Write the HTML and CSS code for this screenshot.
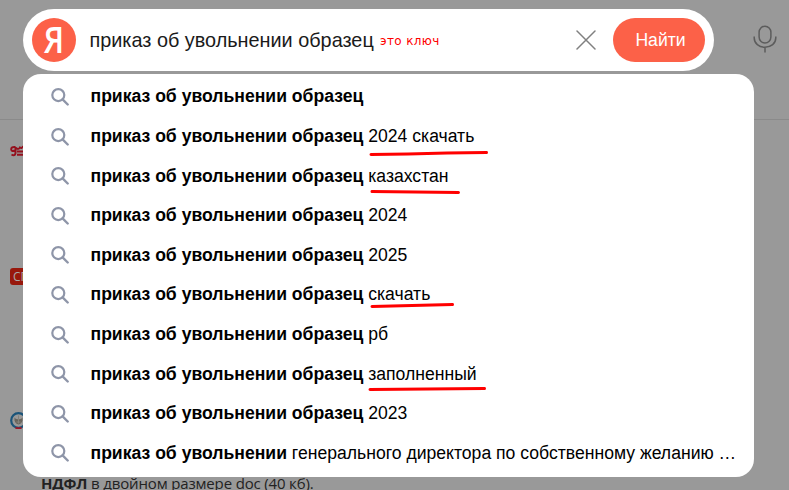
FILE: index.html
```
<!DOCTYPE html>
<html lang="ru">
<head>
<meta charset="UTF-8">
<title>приказ об увольнении образец</title>
<link rel="stylesheet" href="styles.css">
</head>
<body>
<svg class="defs">
	<symbol id="loupe" viewBox="0 0 18 18">
		<circle cx="7.3" cy="7.1" r="6" fill="none" stroke="#8e95a8" stroke-width="2.2"/>
		<path d="M11.6 11.4L16.7 16.5" fill="none" stroke="#8e95a8" stroke-width="2.4" stroke-linecap="round"/>
	</symbol>
</svg>
<div class="top">
	<div class="search">
		<div class="logo"><span>Я</span></div>
		<div class="query">приказ об увольнении образец</div>
		<div class="note">это ключ</div>
		<svg class="clear" viewBox="0 0 20 20"><path d="M1 1L19 19M19 1L1 19" stroke="#808080" stroke-width="1.5" stroke-linecap="round"/></svg>
		<div class="find">Найти</div>
	</div>
	<svg class="mic" viewBox="0 0 24 28">
		<rect x="6.1" y="1.2" width="11.8" height="16.8" rx="5.9"/>
		<path d="M1.2 11.5v1.2C1.2 18.6 6 22.2 12 22.2s10.8-3.6 10.8-9.5v-1.2M12 22.2v5.3"/>
	</svg>
</div>
<div class="results">
	<svg class="fav fav1" viewBox="0 0 17 17">
		<path d="M5.5 4Q1 3.5 1.2 6.5Q1.5 9 5 7.5M5.5 4V10Q5 13.5 1.5 11.5M6 5q2.5 2 4-.5q2 1.5 3-1.5M7 8.5h10M7 11.8h10" fill="none" stroke="#94101d" stroke-width="2"/>
	</svg>
	<div class="fav fav2">СП</div>
	<svg class="fav fav3" viewBox="0 0 17 17">
		<circle cx="8.5" cy="8.5" r="7.3" fill="#999" stroke="#1b5479" stroke-width="2.2"/>
		<path d="M5.5 15.6q3 1.2 6 0" fill="none" stroke="#9d1526" stroke-width="2"/>
		<path d="M4.5 5.5q1.5 2.5 4 1.5q2.5 1 4-1.5v3q-1 3.5-4 4q-3-.5-4-4z" fill="#68645c"/>
		<path d="M8.5 3.5v8M6.5 10h4" stroke="#85827a"/>
	</svg>
	<p class="snippet"><b>НДФЛ</b> в двойном размере doc (40 кб).</p>
</div>
<div class="suggest">
	<div class="item"><svg><use href="#loupe"/></svg><p><b>приказ об увольнении образец</b></p></div>
	<div class="item"><svg><use href="#loupe"/></svg><p><b>приказ об увольнении образец</b> 2024 скачать</p></div>
	<div class="item"><svg><use href="#loupe"/></svg><p><b>приказ об увольнении образец</b> казахстан</p></div>
	<div class="item"><svg><use href="#loupe"/></svg><p><b>приказ об увольнении образец</b> 2024</p></div>
	<div class="item"><svg><use href="#loupe"/></svg><p><b>приказ об увольнении образец</b> 2025</p></div>
	<div class="item"><svg><use href="#loupe"/></svg><p><b>приказ об увольнении образец</b> скачать</p></div>
	<div class="item"><svg><use href="#loupe"/></svg><p><b>приказ об увольнении образец</b> рб</p></div>
	<div class="item"><svg><use href="#loupe"/></svg><p><b>приказ об увольнении образец</b> заполненный</p></div>
	<div class="item"><svg><use href="#loupe"/></svg><p><b>приказ об увольнении образец</b> 2023</p></div>
	<div class="item"><svg><use href="#loupe"/></svg><p><b>приказ об увольнении</b> генерального директора по собственному желанию …</p></div>
</div>
<!-- red pen marks -->
<svg class="marks" viewBox="0 0 789 490">
	<path d="M371 154.5L408 154L447 153L486.5 152.5"/>
	<path d="M372 191.5L458.5 192.5"/>
	<path d="M372 306.5L412 305.5L452.5 304.5"/>
	<path d="M370 389.5L484.5 388.5"/>
</svg>
</body>
</html>
```
FILE: styles.css
```
* {
	box-sizing: border-box;
	margin: 0;
	padding: 0;
}
body {
	position: relative;
	width: 789px;
	height: 490px;
	overflow: hidden;
	background: #999;
	font-family: "Liberation Sans", Arial, sans-serif;
}
svg {
	display: block;
	flex: none;
}
.defs {
	position: absolute;
	width: 0;
	height: 0;
}

.top {
	display: flex;
	height: 120px;
	padding: 9px 0 0 23px;
	border-bottom: 1px solid #8a8a8a;
}
.search {
	display: flex;
	align-items: center;
	width: 691px;
	height: 62px;
	padding: 0 9px;
	border-radius: 31px;
	background: #fff;
}
.logo {
	width: 44px;
	height: 44px;
	border-radius: 50%;
	background: #fc6148;
	color: #fff;
	font: 600 36.5px/43px "Open Sans", sans-serif;
	text-align: center;
}
.logo span {
	display: inline-block;
	transform: scaleX(.86);
}
.query {
	margin-left: 13.5px;
	width: 286px;
	font-size: 19.85px;
	color: #1a1a1a;
	white-space: nowrap;
}
.note {
	margin: 1px 0 0 4.5px;
	color: #f00;
	font: 12px/14px "DejaVu Sans", sans-serif;
	letter-spacing: .35px;
	white-space: nowrap;
}
.clear {
	width: 20px;
	height: 20px;
	margin: 0 16.8px 0 auto;
}
.find {
	width: 92px;
	height: 44px;
	border-radius: 22px;
	background: #fc6148;
	color: #fff;
	font-size: 17.6px;
	line-height: 44px;
	text-align: center;
	padding-left: 3px;
}
.mic {
	width: 24px;
	height: 28px;
	margin: 16px 0 0 38.5px;
	fill: none;
	stroke: #5c5c5c;
	stroke-width: 1.5;
}

.results {
	padding-left: 10px;
}
.fav {
	width: 17px;
	height: 17px;
}
.fav1 {
	margin-top: 23px;
}
.fav2 {
	margin-top: 108px;
	border-radius: 3px;
	background: #98180c;
	color: #aaa;
	font: 12px/17px "Open Sans", sans-serif;
	padding-left: 3px;
}
.fav3 {
	margin-top: 127px;
}
.snippet {
	margin: 44px 0 0 31px;
	color: #222;
	font: 15px/20px "Open Sans", sans-serif;
	letter-spacing: -.16px;
	white-space: nowrap;
}

.suggest {
	position: absolute;
	left: 23px;
	top: 74px;
	width: 731px;
	height: 403px;
	padding-top: 3.2px;
	border-radius: 18px;
	background: #fff;
}
.item {
	display: flex;
	align-items: center;
	height: 39.6px;
	padding-left: 28px;
	font-size: 17.6px;
	color: #000;
	white-space: nowrap;
}
.item svg {
	width: 18px;
	height: 18px;
	margin-right: 21.5px;
}
.marks {
	position: absolute;
	left: 0;
	top: 0;
	width: 789px;
	height: 490px;
	fill: none;
	stroke: #f00;
	stroke-width: 3;
	stroke-linecap: round;
}
```
